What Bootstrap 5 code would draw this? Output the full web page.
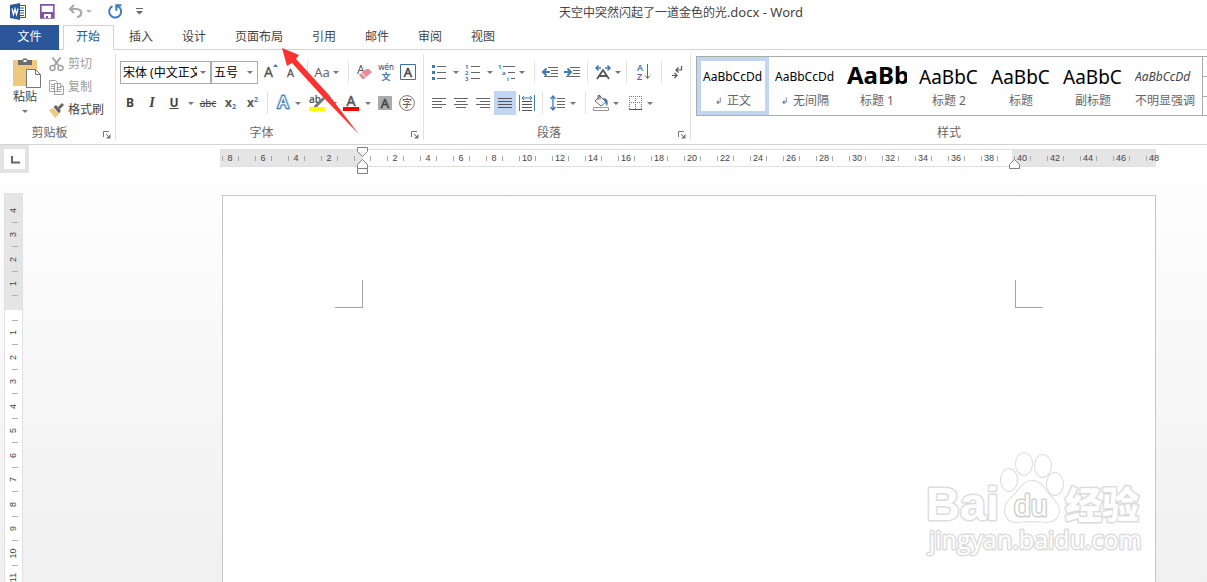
<!DOCTYPE html>
<html lang="zh-CN">
<head>
<meta charset="utf-8">
<meta name="viewport" content="width=device-width, initial-scale=1">
<title>天空中突然闪起了一道金色的光.docx - Word</title>
<link rel="stylesheet" href="https://cdn.jsdelivr.net/npm/bootstrap@5.3.0/dist/css/bootstrap.min.css">
<style>
:root{--blue:#2b579a;--line:#d4d4d4;--ink:#444;--ico:#666;--acc:#3f7ab5}
body{font:12px/16px "Noto Sans","Noto Sans CJK SC",sans-serif;color:var(--ink);background:#fff}
button{border:0;background:none;padding:0;color:inherit;font:inherit}
svg{display:block;flex:none;overflow:visible}
svg text{font-family:"Noto Sans","Noto Sans CJK SC",sans-serif}
/* title bar */
.titlebar{height:25px}
.quick{width:155px;padding:0 0 3px 10px;gap:13px}
.title-latin{font-size:13px}
/* tabs */
.tabs{height:25px;gap:1px;box-shadow:inset 0 -1px var(--line)}
.tabs a{color:var(--ink);text-decoration:none;padding:0 14px;height:25px;line-height:24px}
.tabs .file-tab{background:var(--blue);color:#fff;width:59px;padding:0;margin-right:3px;text-align:center}
.tabs .on{background:#fff;color:var(--blue);border:1px solid var(--line);border-bottom:0;padding:0 12px;width:51px;line-height:22px}
/* ribbon */
.ribbon{height:95px;border-bottom:1px solid var(--line)}
.group{margin:4px 0;padding-top:6px;border-right:1px solid #e1e1e1}
.g-clip{width:116px}.g-font{width:308px;padding-left:3px}.g-para{width:267px;padding-left:4px}
.g-style{padding:2px 0 0 5px;min-width:0;border:0;overflow:hidden}
.tools{height:24px}
.tools + .tools{margin-top:7px}
.foot{height:16px;margin-top:auto;line-height:18px;color:var(--ico)}
.foot button{width:16px;padding:6px 0 0 4px}
.g-font .foot{margin-left:-3px}.g-para .foot{margin-left:-4px}
.g-style .foot{margin-left:-5px}
.ib{width:22px;height:24px;display:flex;align-items:center;justify-content:center;flex:none;color:var(--ink)}
.ib.on{background:#c2d5f2}
.ib.case-btn{width:20px;font-size:13px;color:#666}
.ib.italic-btn{font-family:"Liberation Serif",serif;font-size:14px}
.ib.strike-btn{font-size:10px}
.ar,.ar-s{width:12px;height:24px;display:flex;align-items:center;justify-content:center;flex:none}
.ar-s{width:8px}
.ar::before,.ar-s::before,.tri::before{content:"";border:3px solid transparent;border-top-color:#777;border-bottom:0}
.ar.off::before{border-top-color:#b5b5b5}
.vr-line{width:1px;height:22px;background:#e1e1e1;margin:0 4px;flex:none}
.combo{appearance:none;height:23px;align-self:flex-end;border:1px solid #ababab;border-radius:0;padding:0 13px 0 2px;color:#000;font:12px/20px "Noto Sans","Noto Sans CJK SC",sans-serif;background:#fff url("data:image/svg+xml,%3Csvg xmlns='http://www.w3.org/2000/svg' width='6' height='3'%3E%3Cpath d='M0 0h6L3 3z' fill='%23777'/%3E%3C/svg%3E") no-repeat right 4px center}
.name-box{width:91px;margin-left:1px}.size-box{width:47px;margin-right:1px}
.paste{width:42px;margin-left:4px;height:60px;margin-top:-3px}
.paste .tri{display:flex;line-height:3px;margin-top:5px}
.clip-list{gap:7px;margin:-4px 0 0 3px}
.clip-list button{height:16px;gap:4px;display:flex;align-items:center}
.off{color:#9b9b9b}
/* style gallery */
.gallery{height:60px;border:1px solid #ababab;width:507px;flex:none}
.sty{width:72px;height:58px;border:4px solid transparent;padding:0 2px;flex:none;display:flex;flex-direction:column}
.sty.on{border-color:#c2d5f2}
.prev{height:32px;width:60px;line-height:32px;overflow:hidden;color:#000;text-align:left;white-space:nowrap}
.sty .cap{line-height:16px;color:var(--ico);width:60px;white-space:nowrap;display:flex;justify-content:center}
.ret{font-size:9px;padding-right:4px}
.p-h1{font-size:24px;font-weight:700;line-height:28px}.p-h2{font-size:19px}.p-em{font-style:italic;color:#444}
.scroller{width:20px;border:1px solid #ababab;border-left:0;flex:none}
.scroller button{height:20px;border-bottom:1px solid #ababab}
/* work area */
.work{background:linear-gradient(#fff,#f0f0f0);flex:1 1 0;min-height:0;overflow:hidden}
.corner{width:29px;height:28px;border:4px solid #e3e3e3;background:#fff;padding:7px}
.vruler{width:19px;margin:20px 0 0 4px;border:1px solid #e0e0e0;background:linear-gradient(#e5e5e5 116px,#fff 116px);padding-top:4px;height:398px;font:9px/9px "Liberation Sans",sans-serif}
.vcell{flex:1;display:flex;align-items:center;justify-content:center;position:relative}
.vcell span{transform:rotate(-90deg)}
.vcell::after{content:"";position:absolute;bottom:0;left:7px;width:6px;height:1px;background:#b0b0b0}
.canvas{margin-left:191px}
.hruler{width:936px;height:18px;margin-top:4px;border:solid #e0e0e0;border-width:1px 0;background:linear-gradient(90deg,#e5e5e5 143px,#fff 143px,#fff 792px,#e5e5e5 792px);font:9px/17px "Liberation Sans",sans-serif}
.hcell{flex:0 0 33px;padding-left:1px;text-align:center;position:relative}
.hcell:first-child{margin-left:-7px}
.hcell::before,.hcell::after{content:"";position:absolute;left:9px;top:6px;width:1px;height:5px;background:#a8a8a8}
.hcell::after{left:25px}
.hcell:last-of-type::after{display:none}
.m-left{position:absolute;left:137px;top:-3px}
.m-right{position:absolute;left:789px;top:7px}
.sheet{width:934px;margin:28px 0 0 2px;border:1px solid #c6c6c6;border-bottom:0;background:#fff;padding:84px 112px;flex:1}
.crop{width:28px;height:28px;border:solid #a6a6a6;border-width:0 1px 1px 0}
.crop.r{border-width:0 0 1px 1px}
.wm{position:absolute;right:60px;bottom:20px}
.wm text{font-family:"Liberation Sans",sans-serif}
.wm .wm-cn{font-family:"Noto Sans CJK SC",sans-serif}
.wm .wm-url{font-family:"Open Sans",sans-serif}
.pointer{position:absolute;left:280px;top:46px;pointer-events:none}
</style>
</head>
<body class="vh-100 d-flex flex-column overflow-hidden position-relative">
<header class="titlebar d-flex flex-shrink-0">
  <div class="quick d-flex align-items-center">
    <svg width="17" height="17" viewBox="0 0 17 17"><path d="M9 2.500h6.500v12H9z" fill="#fff" stroke="#2b579a"/><path d="M10 5h4M10 7.500h4M10 10h4M10 12.500h4" stroke="#2b579a"/><path d="M0 2l10-2v17L0 15z" fill="#2b579a"/><path d="M2 5.500l1.400 6L5 6l1.500 5.500L8 5.500" fill="none" stroke="#fff" stroke-width="1.300"/></svg>
    <button aria-label="保存"><svg width="15" height="15" viewBox="0 0 15 15"><path d="M.8.800h13v13H.8z" fill="#fff" stroke="#8451a8" stroke-width="1.700"/><path d="M1 8h13v6H1z" fill="#8451a8"/><path d="M4 10h7v4H8v-2H6v2H4z" fill="#fff"/></svg></button>
    <span class="d-flex align-items-center"><button aria-label="撤消"><svg width="15" height="14" viewBox="0 0 15 14"><path d="M2 5h6c4 0 6 2 5 5-.5 2-2 3-4 3M6 1L2 5l4 4" fill="none" stroke="#a9a9a9" stroke-width="2.200"/></svg></button><button class="ar off" aria-label="撤消列表"></button></span>
    <button aria-label="重复"><svg width="15" height="15" viewBox="0 0 15 15"><path d="M4.500 2.200A6 6 0 1 0 12 4L9 2" fill="none" stroke="#3c7dbf" stroke-width="2"/><path d="M13.500 1.200H8.300v5.600" fill="none" stroke="#3c7dbf" stroke-width="2"/></svg></button>
    <button aria-label="自定义快速访问工具栏"><svg width="7" height="7" viewBox="0 0 7 7"><path d="M0 .500h7" stroke="#666"/><path d="M0 3h7L3.500 6.500z" fill="#666"/></svg></button>
  </div>
  <div class="flex-grow-1 text-center pt-1">天空中突然闪起了一道金色的光<span class="title-latin">.docx - Word</span></div>
</header>

<nav class="tabs d-flex flex-shrink-0">
  <a class="file-tab" href="#">文件</a><a class="on" href="#">开始</a><a href="#">插入</a><a href="#">设计</a><a href="#">页面布局</a><a href="#">引用</a><a href="#">邮件</a><a href="#">审阅</a><a href="#">视图</a>
</nav>

<section class="ribbon d-flex flex-shrink-0">
  <div class="group g-clip d-flex flex-column flex-shrink-0">
    <div class="d-flex">
      <button class="paste d-flex flex-column align-items-center">
        <svg width="30" height="32" viewBox="0 0 30 32"><path d="M3 3h24v26H3z" fill="#edc87e"/><path d="M8 3h4a3.500 3.500 0 0 1 6 0h4v5H8z" fill="#6d6d6d"/><path d="M13.500 3h3v2h-3z" fill="#fff"/><path d="M16.500 12.500h9l5 5v13h-14z" fill="#fff" stroke="#777"/><path d="M25.500 12.500v5h5" fill="none" stroke="#777"/></svg>
        <span>粘贴</span><span class="tri"></span>
      </button>
      <div class="clip-list d-flex flex-column">
        <button class="off"><svg width="15" height="16" viewBox="0 0 15 16"><g fill="none" stroke="#a3a3a3" stroke-width="1.500"><path d="M3.500 1.500L10 10M11.500 1.500L5 10" stroke-width="2"/><circle cx="3.500" cy="12" r="2.500"/><circle cx="11.500" cy="12" r="2.500"/></g></svg>剪切</button>
        <button class="off"><svg width="15" height="15" viewBox="0 0 15 15"><g fill="#fff" stroke="#a3a3a3"><path d="M.5.500h6l2 2v9h-8zM5.500 3.500h6l3 3v8h-9z"/><path d="M2 4.500h3M2 6.500h3M2 8.500h3M7.500 7.500h5M7.500 9.500h5M7.500 11.500h5M11.500 3.500v3h3"/></g></svg>复制</button>
        <button><svg width="15" height="15" viewBox="0 0 15 15"><path d="M0 7l4-2 6 6-4 4z" fill="#edc87e"/><path d="M4.500 4L7 2l5 5.500-2 3zM9 4l4-4 2 2-4 4z" fill="#666"/></svg>格式刷</button>
      </div>
    </div>
    <div class="foot d-flex"><span class="flex-grow-1 text-center">剪贴板</span><button class="lch" aria-label="剪贴板选项"></button></div>
  </div>

  <div class="group g-font d-flex flex-column flex-shrink-0">
    <div class="tools d-flex align-items-center">
      <select class="combo name-box" aria-label="字体"><option>宋体 (中文正文)</option></select><select class="combo size-box" aria-label="字号"><option>五号</option></select>
      <button class="ib" aria-label="增大字号"><svg width="20" height="20"><text x="4" y="15" font-size="14" fill="#555" stroke="#555" stroke-width=".3">A</text><path d="M13 5h5l-2.500-3z" fill="#3f7ab5"/></svg></button>
      <button class="ib" aria-label="减小字号"><svg width="20" height="20"><text x="5" y="15" font-size="11" fill="#555" stroke="#555" stroke-width=".3">A</text><path d="M13 3h5l-2.500 3z" fill="#3f7ab5"/></svg></button>
      <i class="vr-line"></i>
      <button class="ib case-btn">Aa</button><button class="ar-s" aria-label="更改大小写"></button>
      <i class="vr-line ms-2"></i>
      <button class="ib" aria-label="清除格式"><svg width="18" height="18"><text x="2" y="11" font-size="12" fill="#555">A</text><path d="M4 12l7-6h3l3 3-8 7H7z" fill="#e58b9b"/><path d="M6 9.500l5 5" stroke="#fff"/></svg></button>
      <button class="ib" aria-label="拼音指南"><svg width="20" height="22"><text x="10" y="9" font-size="8" text-anchor="middle" fill="#444">wén</text><text x="10" y="19" font-size="9" font-weight="700" text-anchor="middle" fill="#3f7ab5">文</text></svg></button>
      <button class="ib" aria-label="字符边框"><svg width="16" height="16"><path d="M.5.500h15v15H.5z" fill="#fff" stroke="#3f6fa8"/><text x="8" y="13" font-size="13" text-anchor="middle" fill="#444" stroke="#444" stroke-width=".5">A</text></svg></button>
    </div>
    <div class="tools d-flex align-items-center">
      <button class="ib fw-bold">B</button><button class="ib italic-btn fw-bold fst-italic">I</button><button class="ib fw-bold text-decoration-underline">U</button><button class="ar" aria-label="下划线样式"></button>
      <button class="ib strike-btn text-decoration-line-through">abc</button>
      <button class="ib" aria-label="下标"><svg width="14" height="18"><text x="2" y="13" font-size="12" font-weight="700" fill="#555">x</text><text x="9" y="15" font-size="7" font-weight="700" fill="#3f7ab5">2</text></svg></button>
      <button class="ib" aria-label="上标"><svg width="14" height="18"><text x="2" y="13" font-size="12" font-weight="700" fill="#555">x</text><text x="9" y="8" font-size="7" font-weight="700" fill="#3f7ab5">2</text></svg></button>
      <i class="vr-line"></i>
      <button class="ib" aria-label="文本效果"><svg width="18" height="20"><text x="9" y="15" font-size="16" text-anchor="middle" fill="#fff" stroke="#b9d3ee" stroke-width="4" stroke-linejoin="round" paint-order="stroke">A</text><text x="9" y="15" font-size="16" text-anchor="middle" fill="#fff" stroke="#3f7ab5" stroke-width="2" paint-order="stroke">A</text></svg></button><button class="ar-s" aria-label="更多文本效果"></button>
      <button class="ib ms-1" aria-label="突出显示"><svg width="18" height="20"><text x="1" y="10" font-size="10" font-weight="600" fill="#555">ab</text><path d="M6 13l9-9 2 2-8 8H6z" fill="#777"/><path d="M1 14h16v4H1z" fill="#ff0"/></svg></button><button class="ar" aria-label="突出显示颜色"></button>
      <button class="ib" aria-label="字体颜色"><svg width="18" height="20"><text x="9" y="13" font-size="14" text-anchor="middle" fill="#555" stroke="#555" stroke-width=".5">A</text><path d="M1 14h16v4H1z" fill="red"/></svg></button><button class="ar" aria-label="更多颜色"></button>
      <button class="ib" aria-label="字符底纹"><svg width="14" height="14"><path d="M0 0h14v14H0z" fill="#ababab"/><text x="7" y="12" font-size="13" text-anchor="middle" fill="#444" stroke="#444" stroke-width=".5">A</text></svg></button>
      <button class="ib" aria-label="带圈字符"><svg width="16" height="16"><circle cx="8" cy="8" r="7.400" fill="#fff" stroke="#777"/><text x="8" y="12" font-size="10" text-anchor="middle" fill="#444">字</text></svg></button>
    </div>
    <div class="foot d-flex"><span class="flex-grow-1 text-center">字体</span><button class="lch" aria-label="字体选项"></button></div>
  </div>

  <div class="group g-para d-flex flex-column flex-shrink-0">
    <div class="tools d-flex align-items-center">
      <button class="ib" aria-label="项目符号"><svg width="14" height="16"><path d="M5 2.500h9M5 8.500h9M5 14.500h9" stroke="#666"/><path d="M0 1h3v3H0zM0 7h3v3H0zM0 13h3v3H0z" fill="#3f7ab5"/></svg></button><button class="ar" aria-label="项目符号库"></button>
      <button class="ib" aria-label="编号"><svg width="16" height="18"><path d="M6 3.500h9M6 9.500h9M6 15.500h9" stroke="#666"/><g font-size="6" font-weight="700" fill="#3f7ab5"><text x="0" y="6">1</text><text x="0" y="12">2</text><text x="0" y="18">3</text></g></svg></button><button class="ar" aria-label="编号库"></button>
      <button class="ib" aria-label="多级列表"><svg width="18" height="18"><path d="M5 3.500h12M10 9.500h7M13 15.500h4" stroke="#666"/><g font-size="6" font-weight="700" fill="#3f7ab5"><text x="0" y="6">1</text><text x="4" y="12">a</text><text x="9" y="18">i</text></g></svg></button><button class="ar-s" aria-label="列表库"></button>
      <i class="vr-line ms-2"></i>
      <button class="ib" aria-label="减少缩进量"><svg width="16" height="12"><path d="M6 1.500h10M9 4.500h7M9 7.500h7M2 10.500h14" stroke="#666"/><path d="M8 6H1M4.500 2.500L1 6l3.500 3.500" fill="none" stroke="#3f7ab5" stroke-width="2"/></svg></button>
      <button class="ib" aria-label="增加缩进量"><svg width="16" height="12"><path d="M6 1.500h10M9 4.500h7M9 7.500h7M2 10.500h14" stroke="#666"/><path d="M0 6h7M3.500 2.500L7 6 3.500 9.500" fill="none" stroke="#3f7ab5" stroke-width="2"/></svg></button>
      <i class="vr-line"></i>
      <button class="ib" aria-label="中文版式"><svg width="16" height="16"><path d="M2 15l6-9 6 9M4.500 12h7" fill="none" stroke="#555" stroke-width="1.800"/><path d="M1 4h5M3.500 1.500L1 4l2.500 2.500M15 4h-5M12.500 1.500L15 4l-2.500 2.500" fill="none" stroke="#3f7ab5" stroke-width="1.500"/></svg></button><button class="ar-s" aria-label="更多版式"></button>
      <i class="vr-line ms-1"></i>
      <button class="ib" aria-label="排序"><svg width="16" height="20"><text x="3" y="9" font-size="9" font-weight="600" fill="#3f7ab5">A</text><text x="3" y="18" font-size="9" font-weight="600" fill="#8451a8">Z</text><path d="M13.500 2v14M11 13.500l2.500 3 2.500-3" fill="none" stroke="#666"/></svg></button>
      <i class="vr-line ms-2"></i>
      <button class="ib" aria-label="显示编辑标记"><svg width="12" height="14"><path d="M10.500 1v4H5M7.500 2.500L5 5l2.500 2.500M1 10.500h5M3.500 8L6 10.500 3.500 13" fill="none" stroke="#555" stroke-width="1.200"/></svg></button>
    </div>
    <div class="tools d-flex align-items-center">
      <button class="ib" aria-label="左对齐"><svg width="14" height="12"><path d="M0 1.500h14M0 4.500h10M0 7.500h14M0 10.500h10" stroke="#666"/></svg></button>
      <button class="ib" aria-label="居中"><svg width="14" height="12"><path d="M0 1.500h14M2 4.500h10M0 7.500h14M2 10.500h10" stroke="#666"/></svg></button>
      <button class="ib" aria-label="右对齐"><svg width="14" height="12"><path d="M0 1.500h14M4 4.500h10M0 7.500h14M4 10.500h10" stroke="#666"/></svg></button>
      <button class="ib on" aria-label="两端对齐"><svg width="14" height="12"><path d="M0 1.500h14M0 4.500h14M0 7.500h14M0 10.500h14" stroke="#555"/></svg></button>
      <button class="ib" aria-label="分散对齐"><svg width="16" height="16"><path d="M.5 0v16M15.500 0v16M3 3h10M5 1L3 3l2 2M11 1l2 2-2 2" fill="none" stroke="#3f7ab5"/><path d="M3 6.500h10M3 9.500h10M3 12.500h10M3 15.500h10" stroke="#555"/></svg></button>
      <i class="vr-line"></i>
      <button class="ib" aria-label="行距"><svg width="16" height="16"><path d="M3 1v14M.5 4L3 1l2.500 3M.5 12L3 15l2.500-3" fill="none" stroke="#3f7ab5" stroke-width="1.300"/><path d="M7 3.500h8M7 6.500h8M7 9.500h8M7 12.500h8" stroke="#666"/></svg></button><button class="ar-s" aria-label="行距选项"></button>
      <i class="vr-line ms-2"></i>
      <button class="ib" aria-label="底纹"><svg width="18" height="18"><path d="M3 7l5-5 6 6-5 4z" fill="#fff" stroke="#666"/><path d="M6 6V1.500h2V6" fill="none" stroke="#666"/><path d="M11 4c4 0 6 3 4 8-1 0-1-3-2-4z" fill="#3f7ab5"/><path d="M1.500 13.500h15v3h-15z" fill="#fff" stroke="#999"/></svg></button><button class="ar-s" aria-label="底纹颜色"></button>
      <button class="ib ms-1" aria-label="边框"><svg width="13" height="14"><path d="M.5 0v13M6.500 0v13M12.500 0v13M0 .500h13M0 6.500h13" stroke="#777" stroke-dasharray="1 1"/><path d="M0 13.500h13" stroke="#555"/></svg></button><button class="ar-s" aria-label="边框样式"></button>
    </div>
    <div class="foot d-flex"><span class="flex-grow-1 text-center">段落</span><button class="lch" aria-label="段落选项"></button></div>
  </div>

  <div class="group g-style d-flex flex-column flex-grow-1">
    <div class="d-flex">
      <div class="gallery d-flex">
        <button class="sty on"><span class="prev">AaBbCcDd</span><span class="cap"><span class="ret">↲</span>正文</span></button>
        <button class="sty"><span class="prev">AaBbCcDd</span><span class="cap"><span class="ret">↲</span>无间隔</span></button>
        <button class="sty"><span class="prev p-h1">AaBb</span><span class="cap">标题 1</span></button>
        <button class="sty"><span class="prev p-h2">AaBbC</span><span class="cap">标题 2</span></button>
        <button class="sty"><span class="prev p-h2">AaBbC</span><span class="cap">标题</span></button>
        <button class="sty"><span class="prev p-h2">AaBbC</span><span class="cap">副标题</span></button>
        <button class="sty"><span class="prev p-em">AaBbCcDd</span><span class="cap">不明显强调</span></button>
      </div>
      <div class="scroller d-flex flex-column"><button aria-label="上一行"></button><button aria-label="下一行"></button></div>
    </div>
    <div class="foot text-center">样式</div>
  </div>
</section>

<main class="work d-flex position-relative">
  <div class="flex-shrink-0">
    <div class="corner"><svg width="9" height="8"><path d="M1 0v6.500h8" fill="none" stroke="#666" stroke-width="2"/></svg></div>
    <div class="vruler d-flex flex-column" id="vr"></div>
  </div>
  <div class="canvas d-flex flex-column flex-shrink-0">
    <div class="hruler d-flex position-relative flex-shrink-0" id="hr"></div>
    <div class="sheet"><div class="d-flex justify-content-between"><div class="crop"></div><div class="crop r"></div></div></div>
  </div>
  <svg class="wm" width="226" height="112" viewBox="0 0 226 112">
    <g fill="#fff" stroke="#dcdcdc" stroke-width="2" stroke-linejoin="round" paint-order="stroke">
      <text x="5" y="70" font-size="47" font-weight="700" stroke-width="3">Bai</text>
      <ellipse cx="88" cy="30" rx="8" ry="11"/><ellipse cx="103" cy="14" rx="8" ry="11"/><ellipse cx="122" cy="16" rx="8" ry="11"/><ellipse cx="134" cy="34" rx="8" ry="11"/>
      <path d="M111 31c7 0 11 5 15 11s12 11 12 18c0 8-6 12-12 12-5 0-9-1-15-1s-10 1-15 1c-7 0-12-4-12-12s7-12 12-18 8-11 15-11z"/>
      <text x="93" y="66" font-size="30" stroke="#d0d0d0" stroke-width="3">du</text>
      <text class="wm-cn" x="144" y="69" font-size="37" font-weight="900" stroke-width="3">经验</text>
      <text class="wm-url" x="8" y="99" font-size="25" stroke-width="3">jingyan.baidu.com</text>
    </g>
  </svg>
</main>
<svg class="pointer" width="82" height="92" viewBox="0 0 82 92"><path d="M2 2l17 7-3 4 33 36 30 39.500L42 50 12 17l-5 3z" fill="#fa3232"/></svg>

<script src="https://cdn.jsdelivr.net/npm/bootstrap@5.3.0/dist/js/bootstrap.bundle.min.js"></script>
<script>
// ruler scales: one cell per labelled unit, zero left blank
let h = '';
for (let n = -8; n <= 48; n += 2) h += `<span class="hcell">${n ? Math.abs(n) : ''}</span>`;
h += '<svg class="m-left" width="12" height="30"><g fill="#fff" stroke="#808080"><path d="M.5.500h10v4l-5 5-5-5zM.5 21.500h10v-4l-5-5-5 5zM.5 21.500h10v5h-10z"/></g></svg>' +
     '<svg class="m-right" width="12" height="12"><path d="M.5 11.500h10v-4l-5-5-5 5z" fill="#fff" stroke="#808080"/></svg>';
document.getElementById('hr').innerHTML = h;
let v = '';
for (let n = -4; n <= 11; n++) v += `<div class="vcell"><span>${n ? Math.abs(n) : ''}</span></div>`;
document.getElementById('vr').innerHTML = v;
// dialog launcher glyph of each group
document.querySelectorAll('.lch').forEach(b => b.innerHTML = '<svg width="8" height="8"><path d="M.5 6V.500H6M3 3l3 3" fill="none" stroke="#777"/><path d="M7.500 3v4.500H3z" fill="#777"/></svg>');
</script>
</body>
</html>
